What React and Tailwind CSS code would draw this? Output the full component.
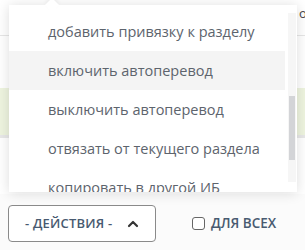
import { ChevronUp } from 'lucide-react';

const items = [
  'добавить привязку к разделу',
  'включить автоперевод',
  'выключить автоперевод',
  'отвязать от текущего раздела',
  'копировать в другой ИБ',
];

export default function App() {
  return (
    <div className="relative w-[305px] h-[250px] overflow-hidden bg-[#fbfbfb] font-['Open_Sans',sans-serif]">
      {/* background table rows */}
      <div className="flex flex-col">
        <div className="h-[36px] bg-white border-b border-[#e6e6e6] flex justify-end pt-[4px]">
          <span className="text-[13px] text-[#444] mr-[-8px]">от</span>
        </div>
        <div className="h-[52px] bg-white" />
        <div className="h-[50px] bg-[#eef4df] border-b-[3px] border-[#e8e8e8]" />
        <div className="h-[56px] bg-white" />
      </div>

      {/* footer actions */}
      <div className="absolute left-0 right-0 top-[205px] flex items-center px-[8px]">
        <button className="w-[148px] h-[37px] border border-[#8a8a8a] rounded-[4px] bg-white flex items-center pl-[16px] pr-[14px] justify-between text-[13px] font-semibold text-[#485a70] tracking-[0.2px]">
          <span>- ДЕЙСТВИЯ -</span>
          <ChevronUp size={16} strokeWidth={3.2} className="text-[#333]" />
        </button>
        <label className="flex items-center ml-[36px] gap-[6px] text-[13.5px] font-semibold text-[#485a70]">
          <span className="w-[13px] h-[13px] border border-[#666] rounded-[3px] bg-white" />
          ДЛЯ ВСЕХ
        </label>
      </div>

      {/* dropdown menu */}
      <div className="absolute left-[9px] top-[5px] w-[288px] h-[187px] bg-white shadow-[0_1px_12px_rgba(0,0,0,0.14)]">
        <div className="absolute left-[38px] -top-[5px] w-[10px] h-[10px] bg-white rotate-45 shadow-[-2px_-2px_4px_rgba(0,0,0,0.05)]" />
        <div className="relative h-full overflow-hidden pt-[7px] pr-[12px]">
          {items.map((t, i) => (
            <div
              key={t}
              className={`h-[39px] flex items-center pl-[39px] text-[14.5px] text-[#5d646d] ${i === 1 ? 'bg-[#f4f4f4]' : ''}`}
            >
              {t}
            </div>
          ))}
        </div>
        {/* scrollbar */}
        <div className="absolute right-[1px] top-[8px] bottom-[10px] w-[8px] bg-[#f6f6f6]">
          <div className="absolute left-[1px] right-[1px] top-[83px] h-[64px] bg-[#d3d4d7]" />
        </div>
      </div>
    </div>
  );
}
